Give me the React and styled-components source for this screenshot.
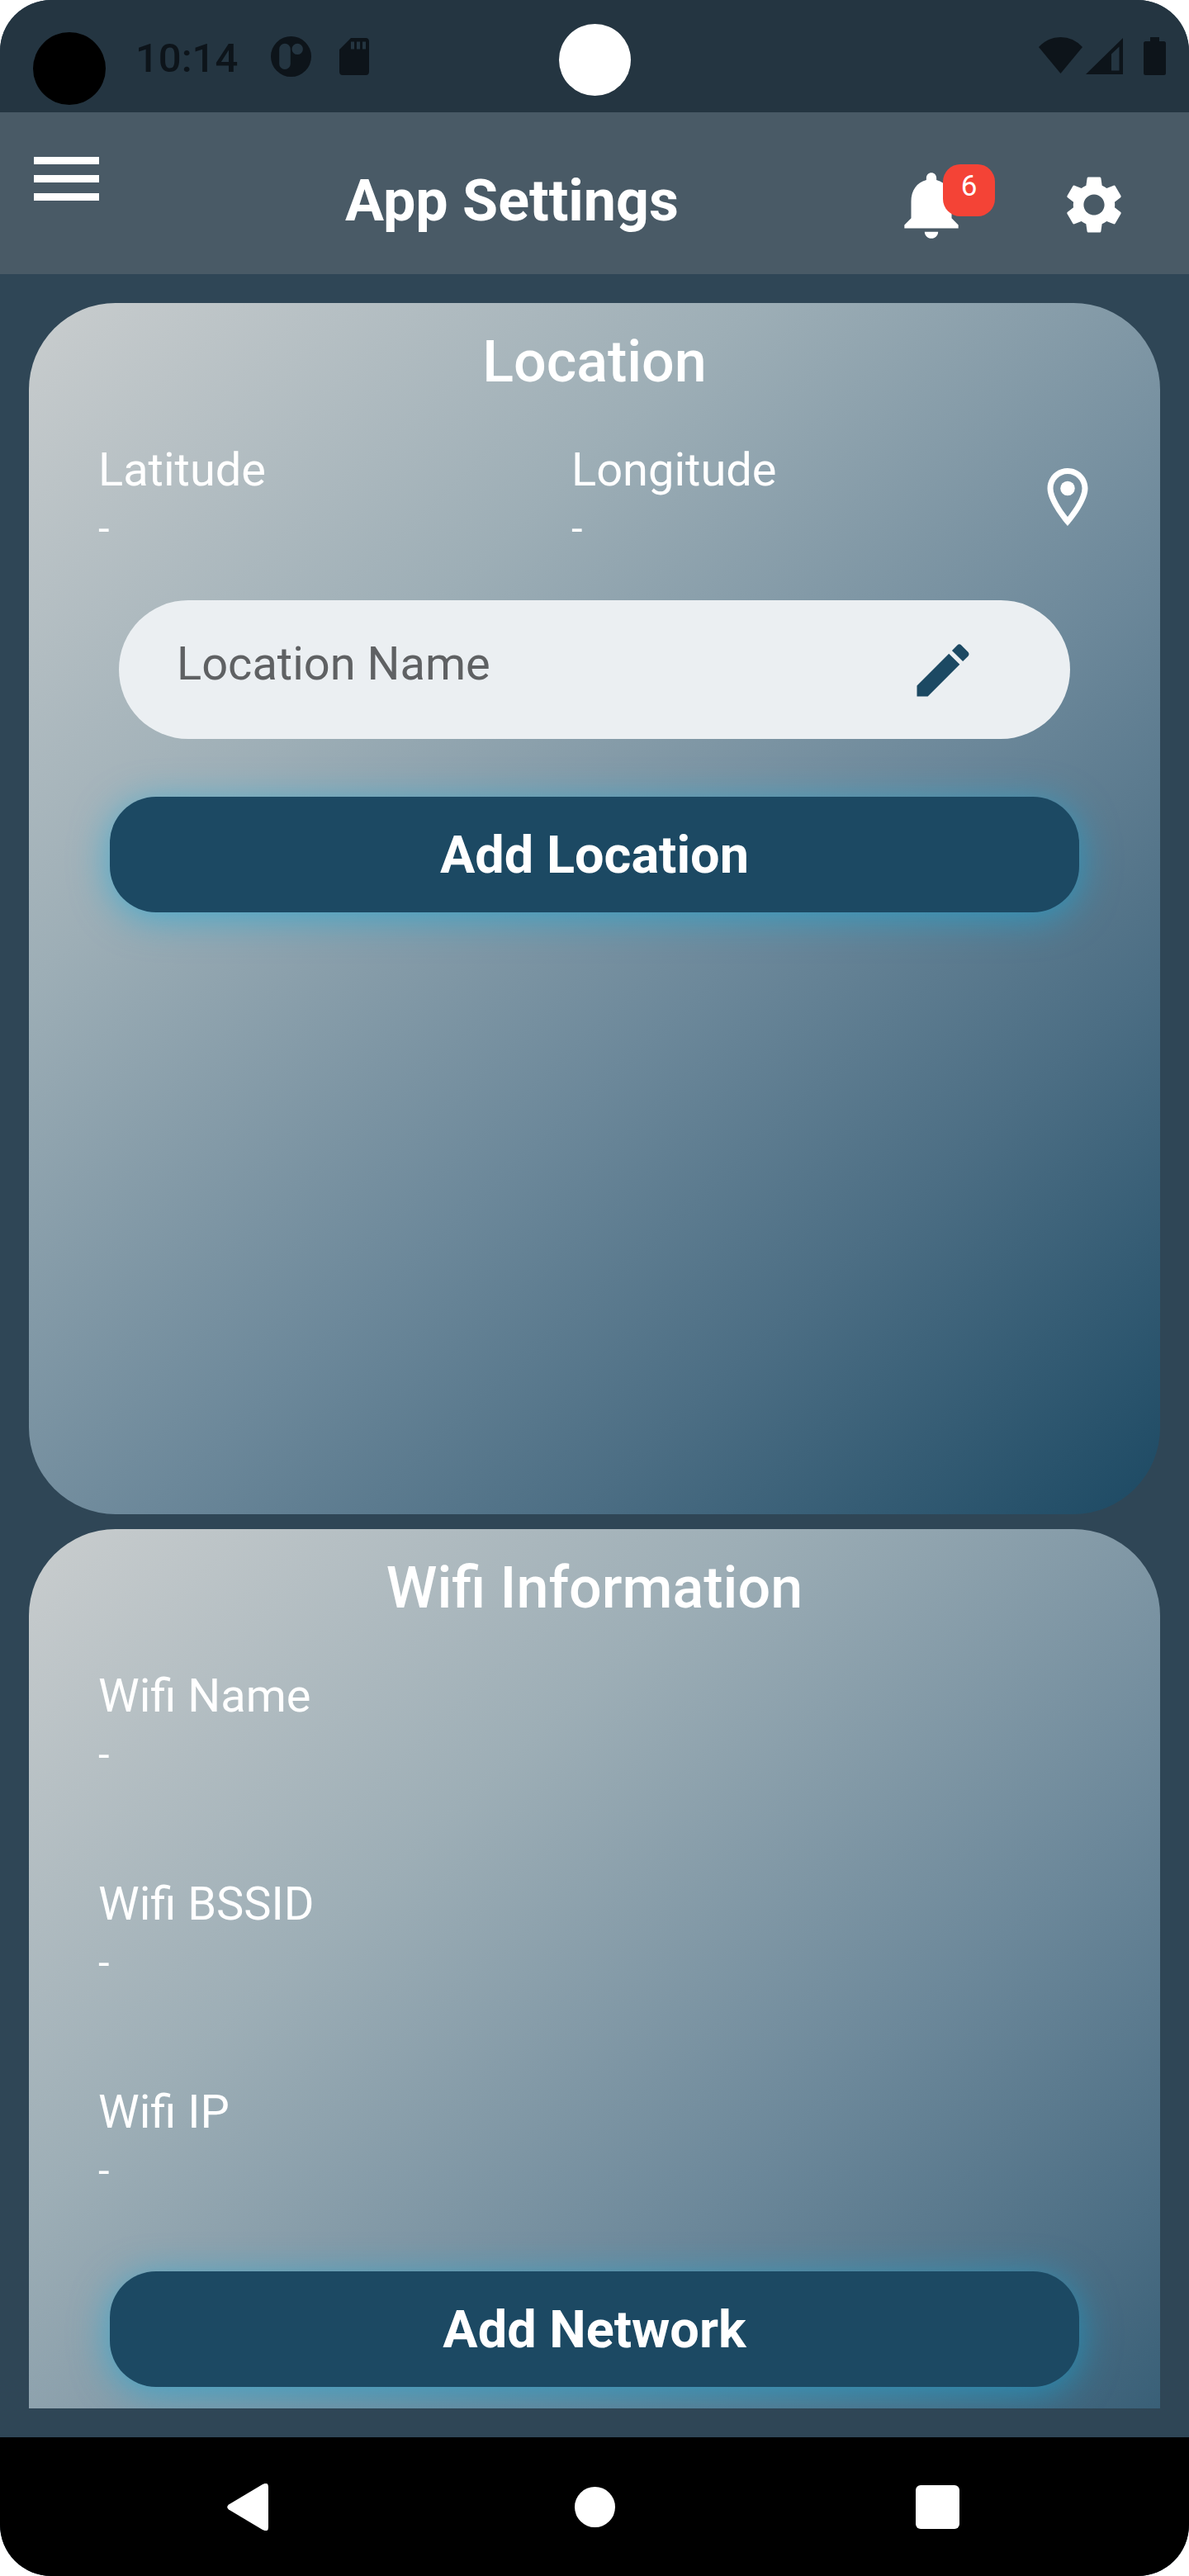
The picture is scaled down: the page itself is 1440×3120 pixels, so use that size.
import React from "react";
import styled, { createGlobalStyle } from "styled-components";

const GlobalStyle = createGlobalStyle`
  * { box-sizing: border-box; }
  body { margin: 0; background: #fff; font-family: Roboto, "Noto Sans", sans-serif; }
`;

const Device = styled.div`
  position: relative;
  display: flex;
  flex-direction: column;
  width: 1440px;
  height: 3120px;
  border-radius: 62px;
  overflow: hidden;
  background: #2f4656;
  color: #fff;
`;

const StatusBar = styled.div`
  display: flex;
  align-items: flex-start;
  justify-content: space-between;
  height: 136px;
  padding: 39px 28px 0 40px;
  background: #243541;
  color: #0d141a;
`;

const StatusGroup = styled.div`
  display: flex;
  align-items: flex-start;
`;

const Avatar = styled.div`
  width: 88px;
  height: 88px;
  border-radius: 50%;
  background: #000;
`;

const Clock = styled.span`
  margin: 3px 0 0 36px;
  width: 124px;
  font-size: 49px;
  font-weight: 500;
  line-height: 58px;
`;

const CameraHole = styled.div`
  position: absolute;
  top: 29px;
  left: 677px;
  width: 87px;
  height: 87px;
  border-radius: 50%;
  background: #fff;
`;

const Glyph = styled.svg`
  display: block;
  flex: none;
  fill: currentColor;
  width: ${(p) => p.$w}px;
  height: ${(p) => p.$h || p.$w}px;
  margin: ${(p) => p.$m || 0};
`;

const Header = styled.header`
  display: flex;
  align-items: flex-start;
  height: 196px;
  padding: 54px 73px 0 41px;
  background: #495a66;
`;

const MenuButton = styled.div`
  display: flex;
  flex-direction: column;
  gap: 13px;
  width: 79px;
`;

const MenuLine = styled.span`
  height: 9px;
  background: #fff;
`;

const HeaderTitle = styled.h1`
  flex: 1;
  margin: 12px 0 0;
  padding-left: 298px;
  font-size: 70px;
  font-weight: 700;
  line-height: 82px;
  white-space: nowrap;
`;

const Bell = styled.div`
  position: relative;
  margin: 9px 106px 0 0;
`;

const Badge = styled.span`
  position: absolute;
  top: 0;
  left: 63px;
  width: 63px;
  height: 63px;
  border-radius: 21px;
  background: #f44336;
  font-size: 35px;
  line-height: 54px;
  text-align: center;
`;

const Content = styled.main`
  display: flex;
  flex-direction: column;
  gap: 17.5px;
  height: 2550px;
  margin: 35px 35px 0;
  overflow: hidden;
`;

const Card = styled.section`
  flex: none;
  display: flex;
  flex-direction: column;
  height: 1467.4px;
  padding-top: 30px;
  border-radius: 105px;
  background: linear-gradient(
    137deg,
    #c9cdce 0%,
    #9daeb6 30%,
    #6c889a 58%,
    #4c6e84 76%,
    #1c4963 100%
  );
`;

const CardTitle = styled.h2`
  margin: 0 0 57px;
  font-size: 70px;
  font-weight: 500;
  line-height: 82px;
  text-align: center;
`;

const Coordinates = styled.div`
  display: grid;
  grid-template-columns: 573px 1fr 84px;
  align-items: center;
  padding: 0 70px 0 84px;
`;

const FieldList = styled.div`
  display: flex;
  flex-direction: column;
  gap: 118px;
  padding-left: 84px;
`;

const FieldBox = styled.div`
  display: flex;
  flex-direction: column;
  gap: 10px;
`;

const FieldLabel = styled.span`
  font-size: 56px;
  line-height: 66px;
`;

const FieldValue = styled.span`
  font-size: 49px;
  line-height: 58px;
`;

const NameInput = styled.div`
  display: flex;
  align-items: center;
  justify-content: space-between;
  width: 1152px;
  height: 168px;
  margin: 57.4px auto 0;
  padding: 0 112px 0 70px;
  border-radius: 84px;
  background: #ebeff2;
  color: #1c4963;
`;

const Placeholder = styled.span`
  padding-bottom: 15px;
  font-size: 56px;
  line-height: 66px;
  color: #5f6163;
`;

const ActionButton = styled.button`
  width: 1174px;
  height: 140px;
  margin: ${(p) => p.$top}px auto 0;
  padding: 2px 0 0;
  border: 0;
  border-radius: 56px;
  background: #1c4963;
  box-shadow: 0 7px 46px rgba(14, 170, 222, 0.58);
  color: #fff;
  font: 700 63px/74px Roboto, "Noto Sans", sans-serif;
`;

const NavBar = styled.nav`
  display: flex;
  align-items: center;
  justify-content: space-between;
  height: 168px;
  margin-top: auto;
  padding: 0 278px 0 275px;
  background: #000;
`;

const HomeDot = styled.span`
  width: 49px;
  height: 49px;
  margin-left: 6px;
  border-radius: 50%;
  background: #fff;
`;

const RecentSquare = styled.span`
  width: 53px;
  height: 53px;
  border-radius: 6px;
  background: #fff;
`;

function Field({ label }) {
  return (
    <FieldBox>
      <FieldLabel>{label}</FieldLabel>
      <FieldValue>-</FieldValue>
    </FieldBox>
  );
}

export default function App() {
  return (
    <>
      <GlobalStyle />
      <Device>
        <StatusBar>
          <StatusGroup>
            <Avatar />
            <Clock>10:14</Clock>
            <Glyph $w={49} $m="5px 0 0 40px" viewBox="0 0 49 49">
              <path
                fillRule="evenodd"
                d="M24.5 0A24.5 24.5 0 0 1 24.5 49A24.5 24.5 0 0 1 24.5 0ZM17 8.7A6.8 6.8 0 0 0 10.200 15.500V33.300A6.800 6.800 0 0 0 23.800 33.300V15.500A6.800 6.800 0 0 0 17 8.700ZM32.200 8.700A6.700 6.700 0 0 0 32.200 22.100A6.700 6.700 0 0 0 32.200 8.700Z"
              />
            </Glyph>
            <Glyph $w={36} $h={45} $m="7px 0 0 34px" viewBox="0 0 36 45">
              <path
                fillRule="evenodd"
                d="M14 0H32Q36 0 36 4.500V40.500Q36 45 32 45H4Q0 45 0 40.500V14ZM14 4.500V13.500H18V4.500ZM21 4.500V13.500H25V4.500ZM28 4.500V13.500H32V4.500Z"
              />
            </Glyph>
          </StatusGroup>
          <StatusGroup>
            <Glyph $w={53} $h={44} $m="6px 4px 0 0" viewBox="0 0 53 44">
              <path d="M0 12Q11 0 26.500 0T53 12L26.500 44Z" />
            </Glyph>
            <Glyph $w={45} $h={44} $m="7px 25px 0 0" viewBox="0 0 45 44">
              <path fillRule="evenodd" d="M45 0V44H0ZM40.500 10.500L31 19.500V39.500H40.500Z" />
            </Glyph>
            <Glyph $w={27} $h={46} $m="6px 0 0" viewBox="0 0 27 46">
              <path d="M8 0H19V5H24.500Q27 5 27 7.500V43.500Q27 46 24.500 46H2.500Q0 46 0 43.500V7.500Q0 5 2.500 5H8Z" />
            </Glyph>
          </StatusGroup>
        </StatusBar>
        <CameraHole />

        <Header>
          <MenuButton>
            <MenuLine />
            <MenuLine />
            <MenuLine />
          </MenuButton>
          <HeaderTitle>App Settings</HeaderTitle>
          <Bell>
            <Glyph $w={98} viewBox="0 0 24 24">
              <path d="M12 22c1.100 0 2-.9 2-2h-4c0 1.100.89 2 2 2zm6-6v-5c0-3.070-1.640-5.640-4.500-6.320V4c0-.83-.67-1.500-1.500-1.500s-1.500.67-1.500 1.500v.68C7.630 5.360 6 7.920 6 11v5l-2 2v1h16v-1l-2-2z" />
            </Glyph>
            <Badge>6</Badge>
          </Bell>
          <Glyph $w={84} $m="16px 0 0" viewBox="0 0 24 24">
            <path d="M19.140 12.940c.04-.3.06-.61.06-.94 0-.32-.02-.64-.07-.94l2.030-1.580c.18-.14.23-.41.12-.61l-1.920-3.320c-.12-.22-.37-.29-.59-.22l-2.390.96c-.5-.38-1.030-.7-1.620-.94l-.36-2.540c-.04-.24-.24-.41-.48-.41h-3.840c-.24 0-.43.17-.47.41l-.36 2.540c-.59.24-1.130.57-1.620.94l-2.390-.96c-.22-.08-.47 0-.59.22L2.740 8.870c-.12.21-.08.47.12.61l2.030 1.580c-.05.3-.09.63-.09.94s.02.64.07.94l-2.030 1.580c-.18.14-.23.41-.12.61l1.920 3.320c.12.22.37.29.59.22l2.390-.96c.5.38 1.030.7 1.620.94l.36 2.540c.05.24.24.41.48.41h3.840c.24 0 .44-.17.47-.41l.36-2.540c.59-.24 1.130-.56 1.620-.94l2.390.96c.22.08.47 0 .59-.22l1.920-3.320c.12-.22.07-.47-.12-.61l-2.010-1.580zM12 15.600c-1.980 0-3.600-1.620-3.600-3.600s1.620-3.600 3.600-3.600 3.600 1.620 3.600 3.600-1.620 3.600-3.600 3.600z" />
          </Glyph>
        </Header>

        <Content>
          <Card>
            <CardTitle>Location</CardTitle>
            <Coordinates>
              <Field label="Latitude" />
              <Field label="Longitude" />
              <Glyph $w={84} $m="0 0 2px" viewBox="0 0 24 24">
                <path d="M12 2C8.130 2 5 5.130 5 9c0 5.250 7 13 7 13s7-7.750 7-13c0-3.870-3.130-7-7-7zM7 9c0-2.760 2.240-5 5-5s5 2.240 5 5c0 2.880-2.880 7.190-5 9.880C9.920 16.210 7 11.850 7 9z" />
                <circle cx="12" cy="9" r="2.5" />
              </Glyph>
            </Coordinates>
            <NameInput>
              <Placeholder>Location Name</Placeholder>
              <Glyph $w={84} $m="2px 0 0" viewBox="0 0 24 24">
                <path d="M3 17.250V21h3.750L17.810 9.940l-3.750-3.750L3 17.250zM20.710 7.040c.39-.39.39-1.020 0-1.410l-2.340-2.340a.9959.9959 0 0 0-1.410 0l-1.830 1.830 3.750 3.750 1.830-1.830z" />
              </Glyph>
            </NameInput>
            <ActionButton $top={70}>Add Location</ActionButton>
          </Card>

          <Card>
            <CardTitle>Wifi Information</CardTitle>
            <FieldList>
              <Field label="Wifi Name" />
              <Field label="Wifi BSSID" />
              <Field label="Wifi IP" />
            </FieldList>
            <ActionButton $top={92}>Add Network</ActionButton>
          </Card>
        </Content>

        <NavBar>
          <Glyph $w={50} $h={57} viewBox="0 0 50 57">
            <path d="M43 1Q50 -2.500 50 4V53Q50 59.500 43 56L2 31.500Q-1.500 28.500 2 25.500Z" />
          </Glyph>
          <HomeDot />
          <RecentSquare />
        </NavBar>
      </Device>
    </>
  );
}
